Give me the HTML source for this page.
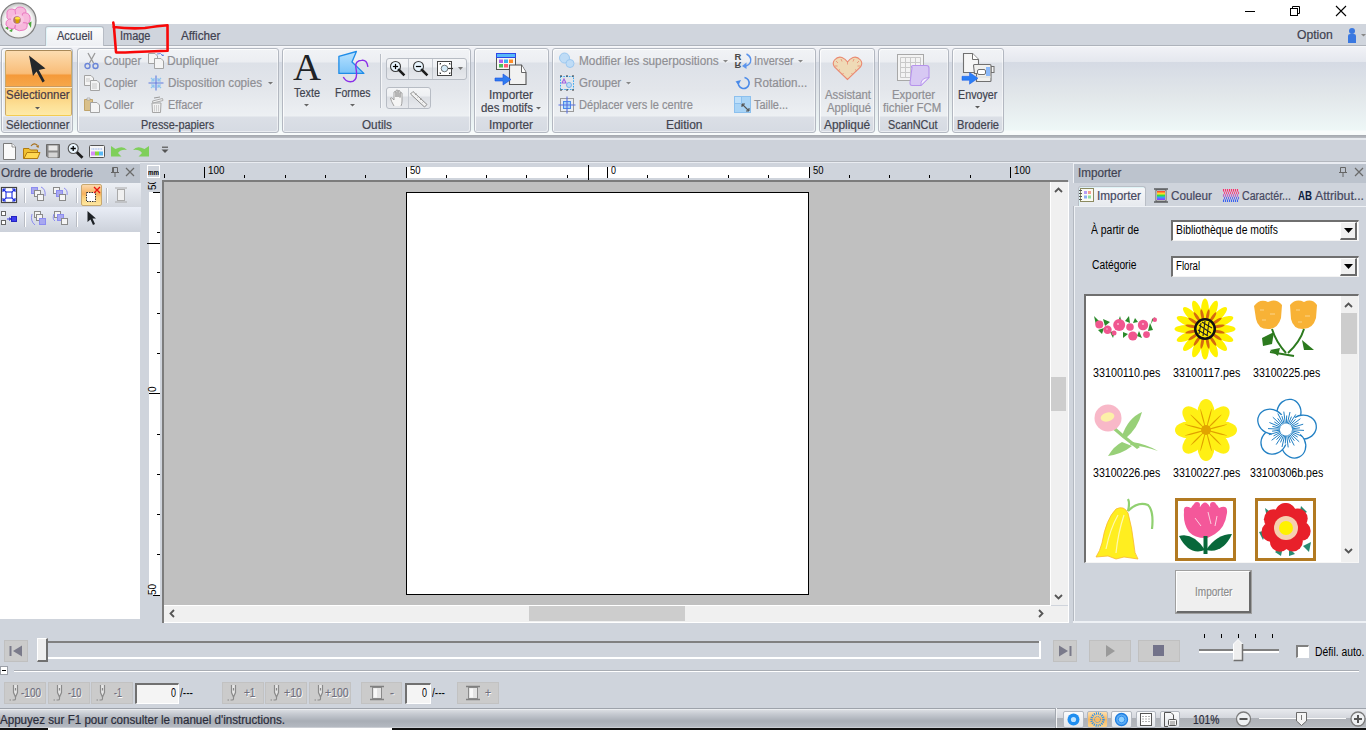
<!DOCTYPE html><html><head><meta charset="utf-8"><style>
*{margin:0;padding:0;box-sizing:border-box}
html,body{width:1366px;height:730px;overflow:hidden;background:#cfd4dc;font-family:"Liberation Sans",sans-serif;}
.a{position:absolute}
.t{position:absolute;white-space:nowrap;line-height:1;transform-origin:0 0}
.s{-webkit-text-stroke:0.2px currentColor}
svg{position:absolute;overflow:visible}
</style></head><body><div class="a" style="left:0px;top:0px;width:1366px;height:24px;background:#fff"></div>
<div class="a" style="left:1245px;top:11px;width:10px;height:1px;background:#000"></div>
<svg style="left:1289px;top:5px;" width="12" height="12" viewBox="0 0 12 12"><rect x="1.5" y="3.5" width="7" height="7" fill="none" stroke="#000"/><path d="M3.5 3.5V1.5H10.5V8.5H8.5" fill="none" stroke="#000"/></svg>
<svg style="left:1335px;top:5px;" width="12" height="12" viewBox="0 0 12 12"><path d="M1 1L11 11M11 1L1 11" stroke="#000" stroke-width="1.1"/></svg>
<div class="a" style="left:0px;top:24px;width:1366px;height:21px;background:#d0d5dd"></div>
<div class="a" style="left:0px;top:45px;width:1366px;height:1px;background:#aeb3bb"></div>
<div class="a" style="left:45px;top:26px;width:59px;height:20px;background:linear-gradient(#fbfcfd,#eef0f4);border:1px solid #b7bcc5;border-bottom:none;border-radius:3px 3px 0 0;box-shadow:inset 1px 1px 0 #dff4f8"></div>
<div class="t s" style="left:56.50px;top:30.00px;font-size:12px;color:#3f4150;font-weight:normal;transform:scaleX(0.9173);">Accueil</div>
<div class="t s" style="left:120.00px;top:30.00px;font-size:12px;color:#3f4150;font-weight:normal;transform:scaleX(0.9132);">Image</div>
<div class="t s" style="left:180.50px;top:30.00px;font-size:12px;color:#3f4150;font-weight:normal;transform:scaleX(0.9753);">Afficher</div>
<div class="t s" style="left:1296.60px;top:29.00px;font-size:12px;color:#3f4150;font-weight:normal;transform:scaleX(1.0141);">Option</div>
<svg style="left:1345px;top:26px;" width="22" height="20" viewBox="0 0 22 20"><circle cx="7" cy="5" r="3" fill="#3a78e0"/><path d="M3 10Q3 8 5 8H9Q11 8 11 10V17H3Z" fill="#3a78e0"/><path d="M16 8H21L18.5 10.5Z" fill="#888"/></svg>
<div class="a" style="left:0px;top:46px;width:1366px;height:89px;background:linear-gradient(#f7f8fa 0,#f7f8fa 1px,#f1f2f6 1px,#e4e7ee 16px,#d5dae4 16px,#e2e7ea 50px,#eef7f7 84px,#f8fbfb 85px)"></div>
<div class="a" style="left:0px;top:135px;width:1366px;height:3px;background:linear-gradient(#a3a7ae,#b9bcc2)"></div>
<div class="a" style="left:0px;top:138px;width:1366px;height:2px;background:#e6e9ee"></div>
<div class="a" style="left:1px;top:48px;width:72px;height:85px;border:1px solid #b3b8c1;border-radius:3px;background:linear-gradient(#f1f3f6 0px,#eceef2 13px,#dde1e8 14px,#e3e6eb 40px,#edf0f3 67px,#dbdfe6 68px,#d5dae2 84px);box-shadow:inset 1px 1px 0 rgba(255,255,255,.8),inset -1px -1px 0 rgba(255,255,255,.5)"></div>
<div class="t s" style="left:5.50px;top:119.00px;font-size:12px;color:#42444f;font-weight:normal;transform:scaleX(0.9520);">Sélectionner</div>
<div class="a" style="left:77px;top:48px;width:202px;height:85px;border:1px solid #b3b8c1;border-radius:3px;background:linear-gradient(#f1f3f6 0px,#eceef2 13px,#dde1e8 14px,#e3e6eb 40px,#edf0f3 67px,#dbdfe6 68px,#d5dae2 84px);box-shadow:inset 1px 1px 0 rgba(255,255,255,.8),inset -1px -1px 0 rgba(255,255,255,.5)"></div>
<div class="t s" style="left:141.40px;top:119.00px;font-size:12px;color:#42444f;font-weight:normal;transform:scaleX(0.9058);">Presse-papiers</div>
<div class="a" style="left:282px;top:48px;width:189px;height:85px;border:1px solid #b3b8c1;border-radius:3px;background:linear-gradient(#f1f3f6 0px,#eceef2 13px,#dde1e8 14px,#e3e6eb 40px,#edf0f3 67px,#dbdfe6 68px,#d5dae2 84px);box-shadow:inset 1px 1px 0 rgba(255,255,255,.8),inset -1px -1px 0 rgba(255,255,255,.5)"></div>
<div class="t s" style="left:361.70px;top:119.00px;font-size:12px;color:#42444f;font-weight:normal;transform:scaleX(0.9772);">Outils</div>
<div class="a" style="left:474px;top:48px;width:75px;height:85px;border:1px solid #b3b8c1;border-radius:3px;background:linear-gradient(#f1f3f6 0px,#eceef2 13px,#dde1e8 14px,#e3e6eb 40px,#edf0f3 67px,#dbdfe6 68px,#d5dae2 84px);box-shadow:inset 1px 1px 0 rgba(255,255,255,.8),inset -1px -1px 0 rgba(255,255,255,.5)"></div>
<div class="t s" style="left:489.00px;top:119.00px;font-size:12px;color:#42444f;font-weight:normal;transform:scaleX(0.9843);">Importer</div>
<div class="a" style="left:552px;top:48px;width:264px;height:85px;border:1px solid #b3b8c1;border-radius:3px;background:linear-gradient(#f1f3f6 0px,#eceef2 13px,#dde1e8 14px,#e3e6eb 40px,#edf0f3 67px,#dbdfe6 68px,#d5dae2 84px);box-shadow:inset 1px 1px 0 rgba(255,255,255,.8),inset -1px -1px 0 rgba(255,255,255,.5)"></div>
<div class="t s" style="left:666.00px;top:119.00px;font-size:12px;color:#42444f;font-weight:normal;transform:scaleX(0.9946);">Edition</div>
<div class="a" style="left:819px;top:48px;width:56px;height:85px;border:1px solid #b3b8c1;border-radius:3px;background:linear-gradient(#f1f3f6 0px,#eceef2 13px,#dde1e8 14px,#e3e6eb 40px,#edf0f3 67px,#dbdfe6 68px,#d5dae2 84px);box-shadow:inset 1px 1px 0 rgba(255,255,255,.8),inset -1px -1px 0 rgba(255,255,255,.5)"></div>
<div class="t s" style="left:824.40px;top:119.00px;font-size:12px;color:#42444f;font-weight:normal;transform:scaleX(0.9872);">Appliqué</div>
<div class="a" style="left:878px;top:48px;width:71px;height:85px;border:1px solid #b3b8c1;border-radius:3px;background:linear-gradient(#f1f3f6 0px,#eceef2 13px,#dde1e8 14px,#e3e6eb 40px,#edf0f3 67px,#dbdfe6 68px,#d5dae2 84px);box-shadow:inset 1px 1px 0 rgba(255,255,255,.8),inset -1px -1px 0 rgba(255,255,255,.5)"></div>
<div class="t s" style="left:888.40px;top:119.00px;font-size:12px;color:#42444f;font-weight:normal;transform:scaleX(0.9049);">ScanNCut</div>
<div class="a" style="left:952px;top:48px;width:52px;height:85px;border:1px solid #b3b8c1;border-radius:3px;background:linear-gradient(#f1f3f6 0px,#eceef2 13px,#dde1e8 14px,#e3e6eb 40px,#edf0f3 67px,#dbdfe6 68px,#d5dae2 84px);box-shadow:inset 1px 1px 0 rgba(255,255,255,.8),inset -1px -1px 0 rgba(255,255,255,.5)"></div>
<div class="t s" style="left:957.40px;top:119.00px;font-size:12px;color:#42444f;font-weight:normal;transform:scaleX(0.9273);">Broderie</div>
<div class="a" style="left:5px;top:50px;width:67px;height:66px;border:1px solid #c9a868;border-top-color:#a88858;border-bottom-color:#f4cc50;border-radius:2px;background:linear-gradient(#fcdcb0 0,#f9bd78 35%,#f59a3a 38%,#f6a84b 56%,#d49a58 57%,#f9c56c 58%,#fde096 85%,#fdeaa8 100%)"></div>
<svg style="left:28px;top:55px;" width="20" height="28" viewBox="0 0 20 28"><path d="M1 0.5L5 21L8.5 16.5L14.5 27.5L16.8 26L10.8 15L17.5 13.5Z" fill="#23272b"/></svg>
<div class="a" style="left:5px;top:86px;width:67px;height:1px;background:#c89a62"></div>
<div class="a" style="left:5px;top:87px;width:67px;height:1px;background:#fde9c0"></div>
<div class="t s" style="left:6.40px;top:89.00px;font-size:12px;color:#4a3a44;font-weight:normal;transform:scaleX(0.9535);">Sélectionner</div>
<svg style="left:35.0px;top:106.5px;" width="5.0" height="2.5" viewBox="0 0 5.0 2.5"><path d="M0 0H5.0L2.5 2.5Z" fill="#5a5a5a"/><path d="M2.5 3.5L5.5 .5" stroke="#fff" stroke-width=".6" opacity=".7"/></svg>
<div class="t s" style="left:103.80px;top:55.00px;font-size:12px;color:#8f8f94;font-weight:normal;transform:scaleX(0.9442);">Couper</div>
<div class="t s" style="left:103.80px;top:77.00px;font-size:12px;color:#8f8f94;font-weight:normal;transform:scaleX(0.9405);">Copier</div>
<div class="t s" style="left:103.80px;top:99.00px;font-size:12px;color:#8f8f94;font-weight:normal;transform:scaleX(0.9489);">Coller</div>
<div class="t s" style="left:167.20px;top:55.00px;font-size:12px;color:#8f8f94;font-weight:normal;transform:scaleX(1.0078);">Dupliquer</div>
<div class="t s" style="left:167.50px;top:77.00px;font-size:12px;color:#8f8f94;font-weight:normal;transform:scaleX(0.9721);">Disposition copies</div>
<div class="t s" style="left:167.50px;top:99.00px;font-size:12px;color:#8f8f94;font-weight:normal;transform:scaleX(0.9127);">Effacer</div>
<svg style="left:267.5px;top:81.5px;" width="5.0" height="2.5" viewBox="0 0 5.0 2.5"><path d="M0 0H5.0L2.5 2.5Z" fill="#777"/><path d="M2.5 3.5L5.5 .5" stroke="#fff" stroke-width=".6" opacity=".7"/></svg>
<div class="t s" style="left:294.00px;top:87.00px;font-size:12px;color:#42444f;font-weight:normal;transform:scaleX(0.9059);">Texte</div>
<div class="t s" style="left:334.50px;top:87.00px;font-size:12px;color:#42444f;font-weight:normal;transform:scaleX(0.8722);">Formes</div>
<svg style="left:304.0px;top:104px;" width="5.0" height="2.5" viewBox="0 0 5.0 2.5"><path d="M0 0H5.0L2.5 2.5Z" fill="#666"/><path d="M2.5 3.5L5.5 .5" stroke="#fff" stroke-width=".6" opacity=".7"/></svg>
<svg style="left:350.0px;top:104px;" width="5.0" height="2.5" viewBox="0 0 5.0 2.5"><path d="M0 0H5.0L2.5 2.5Z" fill="#666"/><path d="M2.5 3.5L5.5 .5" stroke="#fff" stroke-width=".6" opacity=".7"/></svg>
<div class="a" style="left:380px;top:54px;width:1px;height:54px;background:#b9bec6;box-shadow:1px 0 0 #f5f6f8"></div>
<div class="t s" style="left:489.00px;top:89.00px;font-size:12px;color:#42444f;font-weight:normal;transform:scaleX(0.9843);">Importer</div>
<div class="t s" style="left:480.60px;top:102.00px;font-size:12px;color:#42444f;font-weight:normal;transform:scaleX(0.9506);">des motifs</div>
<svg style="left:536.0px;top:106.5px;" width="5.0" height="2.5" viewBox="0 0 5.0 2.5"><path d="M0 0H5.0L2.5 2.5Z" fill="#666"/><path d="M2.5 3.5L5.5 .5" stroke="#fff" stroke-width=".6" opacity=".7"/></svg>
<div class="t s" style="left:578.60px;top:55.00px;font-size:12px;color:#8f8f94;font-weight:normal;transform:scaleX(0.9838);">Modifier les superpositions</div>
<div class="t s" style="left:578.60px;top:77.00px;font-size:12px;color:#8f8f94;font-weight:normal;transform:scaleX(0.9568);">Grouper</div>
<div class="t s" style="left:578.60px;top:99.00px;font-size:12px;color:#8f8f94;font-weight:normal;transform:scaleX(0.9222);">Déplacer vers le centre</div>
<div class="t s" style="left:754.40px;top:55.00px;font-size:12px;color:#8f8f94;font-weight:normal;transform:scaleX(0.9145);">Inverser</div>
<div class="t s" style="left:754.40px;top:77.00px;font-size:12px;color:#8f8f94;font-weight:normal;transform:scaleX(0.9726);">Rotation...</div>
<div class="t s" style="left:754.40px;top:99.00px;font-size:12px;color:#8f8f94;font-weight:normal;transform:scaleX(0.9115);">Taille...</div>
<svg style="left:723.0px;top:59.5px;" width="5.0" height="2.5" viewBox="0 0 5.0 2.5"><path d="M0 0H5.0L2.5 2.5Z" fill="#888"/><path d="M2.5 3.5L5.5 .5" stroke="#fff" stroke-width=".6" opacity=".7"/></svg>
<svg style="left:625.5px;top:81.5px;" width="5.0" height="2.5" viewBox="0 0 5.0 2.5"><path d="M0 0H5.0L2.5 2.5Z" fill="#888"/><path d="M2.5 3.5L5.5 .5" stroke="#fff" stroke-width=".6" opacity=".7"/></svg>
<svg style="left:798.0px;top:59.5px;" width="5.0" height="2.5" viewBox="0 0 5.0 2.5"><path d="M0 0H5.0L2.5 2.5Z" fill="#888"/><path d="M2.5 3.5L5.5 .5" stroke="#fff" stroke-width=".6" opacity=".7"/></svg>
<div class="t s" style="left:825.00px;top:89.00px;font-size:12px;color:#8f8f94;font-weight:normal;transform:scaleX(0.9446);">Assistant</div>
<div class="t s" style="left:827.00px;top:102.00px;font-size:12px;color:#8f8f94;font-weight:normal;transform:scaleX(0.9422);">Appliqué</div>
<div class="t s" style="left:891.70px;top:89.00px;font-size:12px;color:#8f8f94;font-weight:normal;transform:scaleX(0.9493);">Exporter</div>
<div class="t s" style="left:883.30px;top:102.00px;font-size:12px;color:#8f8f94;font-weight:normal;transform:scaleX(0.9511);">fichier FCM</div>
<div class="t s" style="left:958.40px;top:89.00px;font-size:12px;color:#42444f;font-weight:normal;transform:scaleX(0.8955);">Envoyer</div>
<svg style="left:975.0px;top:106px;" width="5.0" height="2.5" viewBox="0 0 5.0 2.5"><path d="M0 0H5.0L2.5 2.5Z" fill="#5a5a5a"/><path d="M2.5 3.5L5.5 .5" stroke="#fff" stroke-width=".6" opacity=".7"/></svg>
<div class="a" style="left:0px;top:140px;width:1366px;height:21px;background:#cdd2da"></div>
<div class="a" style="left:0px;top:161px;width:1366px;height:1px;background:#b3b7be"></div>
<div class="a" style="left:0px;top:162px;width:1366px;height:1px;background:#e9ecf2"></div>
<svg style="left:0px;top:1px;" width="38" height="38" viewBox="0 0 38 38"><defs><radialGradient id="ab" cx="50%" cy="55%" r="55%"><stop offset="0" stop-color="#ffffff"/><stop offset=".75" stop-color="#f2f2f2"/><stop offset=".92" stop-color="#cfcfcf"/><stop offset="1" stop-color="#a8a8a8"/></radialGradient></defs>
<circle cx="18.5" cy="19.5" r="17.5" fill="url(#ab)" stroke="#7e7e7e" stroke-width="1.2"/>
<path d="M5 27L9 25L8 29Z M9 30L13 27L12 31Z M28 22L31.5 20.5L31 27Z" fill="#4fa83e"/>
<g fill="#f7b8dc" stroke="#ea7cc2" stroke-width="1">
<path d="M7 14Q6 8 12 8Q15 8 17 11L16 18L9 19Q6 17 7 14Z"/>
<path d="M15 9Q17 5 21 6Q26 7 26 11L23 17L16 16Z"/>
<path d="M23 12Q29 11 30 16Q31 21 27 23L20 20Z"/>
<path d="M27 22Q28 28 24 29Q19 31 15 28L16 21Z"/>
<path d="M14 28Q8 28 6 24Q5 20 9 18L17 19Z"/></g>
<ellipse cx="17.5" cy="18.5" rx="6.5" ry="5.5" fill="#f9c6e2"/>
<circle cx="17" cy="19" r="3.8" fill="#9b5a4a" opacity=".75"/><path d="M15 17H20L18.5 22H16Z" fill="#d8a000"/><ellipse cx="17.5" cy="17.2" rx="2.6" ry="1.3" fill="#ffe640"/></svg>
<svg style="left:110px;top:20px;" width="62" height="36" viewBox="0 0 62 36"><path d="M3.3 2.6L4 7.5Q5 20 6 32M3.5 7Q20 9 35 8Q48 6 57.5 5.2L57.6 30.8Q40 31.5 25 32Q15 32.5 6.2 32.5" fill="none" stroke="#f80808" stroke-width="2.6" stroke-linecap="round" stroke-linejoin="round"/></svg>
<svg style="left:84px;top:52px;" width="15" height="18" viewBox="0 0 15 18"><path d="M4 1L9.5 11M11 1L5.5 11" stroke="#9a9a9a" stroke-width="1.3"/><circle cx="3.5" cy="14" r="2.5" fill="none" stroke="#6b86d8" stroke-width="1.4"/><circle cx="11.5" cy="14" r="2.5" fill="none" stroke="#6b86d8" stroke-width="1.4"/></svg>
<svg style="left:84px;top:75px;" width="17" height="17" viewBox="0 0 17 17"><path d="M0.5 0.5H7L9.5 3V10.5H0.5Z" fill="#f4f4f4" stroke="#a3a3a3"/><path d="M6.5 5.5H13L15.5 8V15.5H6.5Z" fill="#f4f4f4" stroke="#a3a3a3"/><path d="M2 4H6M2 6H6M8 9H13M8 11H13M8 13H13" stroke="#bdbdbd" stroke-width=".8"/></svg>
<svg style="left:84px;top:97px;" width="17" height="17" viewBox="0 0 17 17"><path d="M.5 2.5H8.5V13.5H.5Z" fill="#d9c08a" stroke="#c0a46a"/><path d="M3 1H6V3H3Z" fill="#eee" stroke="#999" stroke-width=".6"/><path d="M6.5 5.5H13L15.5 8V15.5H6.5Z" fill="#f4f4f4" stroke="#a3a3a3"/></svg>
<svg style="left:148px;top:52px;" width="17" height="18" viewBox="0 0 17 18"><path d="M0.5 1.5H7L9.5 4V11.5H0.5Z" fill="#f4f4f4" stroke="#a3a3a3"/><path d="M6.5 6.5H13L15.5 9V16.5H6.5Z" fill="#f4f4f4" stroke="#a3a3a3"/><path d="M9 2Q13 0 15 4" fill="none" stroke="#5a7ee0" stroke-width=".9"/><path d="M13.5 4H16L15 2Z" fill="#5a7ee0"/></svg>
<svg style="left:148px;top:75px;" width="16" height="16" viewBox="0 0 16 16"><path d="M8 .5V15.5M.5 8H15.5" stroke="#5c7be0" stroke-width="1.1"/><g stroke="#8cc4f0" stroke-width="1.2" fill="none"><path d="M3 3L6 6M3 6H6V3M13 3L10 6M10 3V6H13M3 13L6 10M3 10H6V13M13 13L10 10M10 13V10H13"/></g></svg>
<svg style="left:150px;top:96px;" width="15" height="18" viewBox="0 0 15 18"><path d="M2 7H11L10.5 16.5H2.5Z" fill="#f2f2f2" stroke="#a5a5a5"/><path d="M4.5 9V15.5M6.5 9V15.5M8.5 9V15.5" stroke="#c4c4c4" stroke-width=".8"/><path d="M2.5 5L12.5 2.5L13 4.5L3 7Z" fill="#f0f0f0" stroke="#a5a5a5" stroke-width=".9"/><path d="M4 2L10 1" stroke="#999"/></svg>
<div class="t" style="left:293px;top:48px;font-family:&quot;Liberation Serif&quot;,serif;font-size:38px;color:#1f2326;transform:scaleX(1.02)">A</div>
<svg style="left:337px;top:50px;" width="33" height="34" viewBox="0 0 33 34"><defs><linearGradient id="fg" x1="0" y1="0" x2="0" y2="1"><stop offset="0" stop-color="#b8e2ff"/><stop offset="1" stop-color="#7cc4f8"/></linearGradient></defs><path d="M1.9 6.3L19.4 1.5L15 12L26.9 23.4H1.9Z" fill="url(#fg)" stroke="#1e8ce8" stroke-width="1.3" stroke-linejoin="round"/><path d="M30.9 16.8Q30 9.5 24.7 10.3Q18 11 18.8 17Q19.6 22 19.6 24Q19.5 31.8 13.3 31.8Q8.5 31.6 6.3 27" fill="none" stroke="#8a2ee8" stroke-width="1.4"/></svg>
<div class="a" style="left:386px;top:58px;width:81px;height:22px;border:1px solid #b7bcc4;border-radius:3px;background:linear-gradient(#f4f5f7 0,#eef0f3 8px,#dcdfe4 9px,#e7e9ed 100%)"></div>
<div class="a" style="left:408px;top:59px;width:1px;height:20px;background:#c5c9d0"></div>
<div class="a" style="left:432px;top:59px;width:1px;height:20px;background:#c5c9d0"></div>
<div class="a" style="left:386px;top:87px;width:45px;height:22px;border:1px solid #b7bcc4;border-radius:3px;background:linear-gradient(#f4f5f7 0,#eef0f3 8px,#dcdfe4 9px,#e7e9ed 100%)"></div>
<div class="a" style="left:408px;top:88px;width:1px;height:20px;background:#c5c9d0"></div>
<svg style="left:386px;top:58px;" width="81" height="22" viewBox="0 0 81 22"><circle cx="9.5" cy="8.5" r="5" fill="#e9f6ff" stroke="#3a3a3a" stroke-width="1.1"/><path d="M13.0 12.0L17.5 16.5" stroke="#1c1c1c" stroke-width="2.6" stroke-linecap="square"/><path d="M6.9 8.5H12.1" stroke="#000" stroke-width="1.2"/><path d="M9.5 5.9V11.1" stroke="#000" stroke-width="1.2"/><circle cx="32.5" cy="8.5" r="5" fill="#e9f6ff" stroke="#3a3a3a" stroke-width="1.1"/><path d="M36.0 12.0L40.5 16.5" stroke="#1c1c1c" stroke-width="2.6" stroke-linecap="square"/><path d="M29.9 8.5H35.1" stroke="#000" stroke-width="1.2"/><rect x="51.5" y="3.5" width="14" height="14" fill="#fff" stroke="#444"/><circle cx="58.5" cy="10.5" r="3.3" fill="#d5ecfa" stroke="#555" stroke-width=".8"/><path d="M54 6.5V5.5H55M63 5.5H64V6.5M54 14.5V15.5H55M63 15.5H64V14.5" stroke="#333"/><path d="M62 10.5H67" stroke="#333" stroke-width="1.2"/><path d="M72 9H77L74.5 12Z" fill="#777"/></svg>
<svg style="left:386px;top:87px;" width="45" height="22" viewBox="0 0 45 22"><path d="M8 19Q5 14 4.5 11Q5 10 7 12L8 13V5Q9 4 10 5V10V3.5Q11 2.5 12 3.5V10V4Q13 3 14 4V10.5V6Q15 5 16 6V14Q16 17 15 19" fill="#f5f5f5" stroke="#9a9a9a" stroke-width=".9"/><path d="M27 4.5L41 17.5L38.5 20L24.5 7Z" fill="#f1f1f1" stroke="#8e8e8e"/><path d="M29 8L30.5 6.5M31.5 10.5L33 9M34 13L35.5 11.5M36.5 15.5L38 14" stroke="#999" stroke-width=".8"/></svg>
<svg style="left:494px;top:51px;" width="34" height="36" viewBox="0 0 34 36"><rect x="2.5" y="2.5" width="19" height="16" fill="#f6f6f2" stroke="#555"/><rect x="2.5" y="2.5" width="19" height="4" fill="#57b8f8" stroke="#2c48e8"/><rect x="5" y="8.5" width="4" height="3.5" fill="#b05ef0"/><rect x="10" y="8.5" width="4" height="3.5" fill="#37b0f0"/><rect x="15" y="8.5" width="4" height="3.5" fill="#ff8c28"/><rect x="5" y="13" width="4" height="3.5" fill="#4ebe5a"/><rect x="10" y="13" width="4" height="3.5" fill="#ff5a78"/><path d="M15.5 14V33.5H32V21.5L27.5 14Z" fill="#f2f2f2" stroke="#555" stroke-width="1.1"/><path d="M27.5 14V21.5H32" fill="#fff" stroke="#555" stroke-width=".9"/><path d="M1 27H9V23L17 28.5L9 34V30H1Z" fill="#2f7cf0" stroke="#1a4ee0" stroke-width=".6"/></svg>
<svg style="left:558px;top:51px;" width="18" height="18" viewBox="0 0 18 18"><circle cx="6.5" cy="7" r="5" fill="#bfdcf6" stroke="#9cc8f0"/><circle cx="12" cy="12.5" r="4" fill="#bfdcf6" stroke="#9cc8f0"/></svg>
<svg style="left:558px;top:74px;" width="18" height="18" viewBox="0 0 18 18"><rect x="2.5" y="2.5" width="13" height="13" fill="none" stroke="#36a8f0" stroke-dasharray="1.6 1.2"/><path d="M2 2H4M14 2H16M2 16H4M14 16H16M8 2H10M8 16H10" stroke="#333"/><path d="M6 5L8 9H4Z" fill="none" stroke="#a060e0" stroke-width="1.1"/><circle cx="11" cy="11" r="2.5" fill="#bfdcf6" stroke="#79b4ea"/></svg>
<svg style="left:557px;top:96px;" width="20" height="18" viewBox="0 0 20 18"><rect x="3.5" y="2.5" width="13" height="13" fill="none" stroke="#9a9a9a"/><rect x="6.5" y="5.5" width="7" height="7" fill="#a8d4f8" stroke="#4d8ce8"/><path d="M10 .5V17.5M1.5 9H18.5" stroke="#5a70e0" stroke-width="1.1"/></svg>
<svg style="left:734px;top:52px;" width="20" height="19" viewBox="0 0 20 19"><text x="0.5" y="8" font-family="Liberation Sans" font-weight="bold" font-size="9.5" fill="#4a4a4a">R</text><g transform="translate(0,18) scale(1,-1)"><text x="0.5" y="8" font-family="Liberation Sans" font-weight="bold" font-size="9.5" fill="#4a4a4a">R</text></g><path d="M12.5 2Q18 5 16.5 10Q15 13.5 11 14" fill="none" stroke="#5b94ec" stroke-width="1.5"/><path d="M8 14L12.5 10.5L12.5 17Z" fill="#5b94ec"/></svg>
<svg style="left:735px;top:75px;" width="16" height="16" viewBox="0 0 16 16"><path d="M9.5 2.5A5.5 5.5 0 1 1 3.5 6" fill="none" stroke="#4a8ae8" stroke-width="1.6"/><path d="M0.5 6.5L6 5L3.5 10Z" fill="#4a8ae8"/></svg>
<svg style="left:734px;top:96px;" width="18" height="18" viewBox="0 0 18 18"><rect x=".5" y=".5" width="16" height="16" fill="#a9d4f6" stroke="#8cc0ee"/><rect x=".5" y=".5" width="7" height="7" fill="#bfe0fa" stroke="#8cc0ee"/><path d="M8 8L15 15M8 8H11M8 8V11M15 15H12M15 15V12" stroke="#555" stroke-width="1.1"/></svg>
<svg style="left:832px;top:56px;" width="31" height="25" viewBox="0 0 31 25"><path d="M15.5 23.5L2.5 11Q0 7 2.5 4Q6 0 10 1.5Q13.5 3 15.5 6Q17.5 3 21 1.5Q25 0 28.5 4Q31 7 28.5 11Z" fill="#efdab6" stroke="#ea8a72" stroke-width="1.1"/><path d="M4 5L6 7M9 3L10 5.5M15.5 6V8.5M22 3L21 5.5M27 5L25 7M3 10H5.5M28 10H25.5M6 15L8 13.5M25 15L23 13.5M10 19L11.5 17M21 19L19.5 17" stroke="#ea8a72" stroke-width=".8"/></svg>
<svg style="left:896px;top:53px;" width="35" height="34" viewBox="0 0 35 34"><rect x="1.5" y="1.5" width="26" height="26" fill="#f3f3f3" stroke="#a8a8a8"/><path d="M4.5 4.5H24.5V24.5H4.5Z M9.5 4.5V24.5M14.5 4.5V24.5M19.5 4.5V24.5M4.5 9.5H24.5M4.5 14.5H24.5M4.5 19.5H24.5" fill="none" stroke="#c9c9c9"/><path d="M16 14.5Q14.5 13 17 12.5H30.5Q33 12.5 33 15V24.5L25 32.5H16Q14 32.5 14 30Z" fill="#d7c8f3" stroke="#b693ec" stroke-width="1.1"/><path d="M25 32.5Q24 25 33 24.5Z" fill="#f2eefc" stroke="#b693ec" stroke-width=".9"/></svg>
<svg style="left:960px;top:51px;" width="36" height="34" viewBox="0 0 36 34"><path d="M3.5 2.5H12.5L18.5 8.5V21.5H3.5Z" fill="#f6f6f6" stroke="#707070" stroke-width="1.1"/><path d="M12.5 2.5V8.5H18.5" fill="#fff" stroke="#707070" stroke-width="1"/><rect x="31" y="15.5" width="3" height="6" fill="#f4f4f4" stroke="#707070"/><path d="M13.5 14.5Q13.5 13.5 14.5 13.5H30Q31 13.5 31 14.5V29.5Q31 30.5 30 30.5H16.5V22.5H14.5Z" fill="#f0f0ee" stroke="#707070" stroke-width="1.1"/><rect x="17.5" y="18.5" width="8" height="5" rx="1.5" fill="#fff" stroke="#707070"/><rect x="26" y="16" width="4" height="9" fill="#8ab8f8"/><path d="M16 26H31" stroke="#dcdcd8"/><path d="M2 25.3H9.5V21.5L18 27.3L9.5 33.2V29.3H2Z" fill="#2a7ef6" stroke="#1a5ae8" stroke-width=".5"/></svg>
<svg style="left:1px;top:142px;" width="16" height="19" viewBox="0 0 16 19"><path d="M2.5 1.5H11L14.5 5V17.5H2.5Z" fill="#fafafa" stroke="#7a7a7a"/><path d="M11 1.5V5H14.5" fill="#fff" stroke="#7a7a7a" stroke-width=".8"/></svg>
<svg style="left:22px;top:142px;" width="19" height="19" viewBox="0 0 19 19"><path d="M1.5 6.5H7L8.5 8H15.5V16.5H1.5Z" fill="#f0c030" stroke="#b07a10"/><path d="M2 16.5L5 10.5H18L15.5 16.5Z" fill="#ffd850" stroke="#b07a10"/><path d="M9 4Q12 0 15.5 3.5" fill="none" stroke="#a8701a" stroke-width="1.1"/><path d="M14 4.5L17 3L16.5 6Z" fill="#a8701a"/></svg>
<svg style="left:45px;top:143px;" width="16" height="16" viewBox="0 0 16 16"><path d="M1.5 1.5H14.5V14.5H3L1.5 13Z" fill="#888" stroke="#6b6b6b"/><rect x="3.5" y="2.5" width="9" height="5" fill="#e8e8e8"/><rect x="3.5" y="9.5" width="9" height="5" fill="#d5d5d5"/></svg>
<svg style="left:67px;top:142px;" width="18" height="18" viewBox="0 0 18 18"><circle cx="6.2" cy="6.5" r="5" fill="#eaf6ff" stroke="#555" stroke-width="1.1"/><path d="M3.6 6.5H8.8M6.2 3.9V9.1" stroke="#000" stroke-width="1.3"/><path d="M9.8 10.3L15.5 15.8" stroke="#1c1c1c" stroke-width="2.8"/></svg>
<svg style="left:89px;top:145px;" width="17" height="14" viewBox="0 0 17 14"><rect x=".5" y=".5" width="15" height="12" rx="1" fill="#f6f6f6" stroke="#555"/><path d="M2.5 4H13.5" stroke="#88aaee" stroke-dasharray="1 .6"/><rect x="2" y="6.5" width="4" height="4" fill="#d58cf8"/><rect x="6" y="6.5" width="4" height="4" fill="#8ad838"/><rect x="10" y="6.5" width="4" height="4" fill="#5ab8f4"/></svg>
<svg style="left:110px;top:145px;" width="18" height="13" viewBox="0 0 18 13"><path d="M1 1L1 11.5L11.5 11.5L8 8Q11 4 17 5Q13 0 5.5 4Z" fill="#7fcf5a"/></svg>
<svg style="left:132px;top:145px;" width="18" height="13" viewBox="0 0 18 13"><path d="M17 1L17 11.5L6.5 11.5L10 8Q7 4 1 5Q5 0 12.5 4Z" fill="#7fcf5a"/></svg>
<svg style="left:161px;top:146px;" width="8" height="8" viewBox="0 0 8 8"><path d="M1 1.2H7" stroke="#555" stroke-width="1.2"/><path d="M.5 3.5H7.5L4 7Z" fill="#555"/></svg>
<div class="a" style="left:0px;top:162px;width:140px;height:2px;background:#e9ecf2"></div>
<div class="a" style="left:0px;top:164px;width:140px;height:19px;background:#bcc3cd"></div>
<div class="t s" style="left:0.50px;top:167.00px;font-size:12px;color:#3f4150;font-weight:normal;transform:scaleX(0.9715);">Ordre de broderie</div>
<svg style="left:109px;top:166px;" width="12" height="12" viewBox="0 0 12 12"><path d="M3.5 1.5H8.5V6.5H3.5Z M2 6.5H10M6 6.5V11" fill="none" stroke="#666" stroke-width="1"/><path d="M4.5 1.5V6.5" stroke="#666"/></svg>
<svg style="left:125px;top:167px;" width="10" height="10" viewBox="0 0 10 10"><path d="M1 1L9 9M9 1L1 9" stroke="#6a6a6a" stroke-width="1.2"/></svg>
<div class="a" style="left:0px;top:183px;width:141px;height:24px;background:linear-gradient(#edf0f5,#d2d6de)"></div>
<div class="a" style="left:0px;top:207px;width:141px;height:25px;background:linear-gradient(#e9edf6,#ccd1da)"></div>
<div class="a" style="left:24px;top:188px;width:1px;height:15px;background:#b8bcc4;box-shadow:1px 0 0 #fff"></div>
<div class="a" style="left:76px;top:188px;width:1px;height:15px;background:#b8bcc4;box-shadow:1px 0 0 #fff"></div>
<div class="a" style="left:106px;top:188px;width:1px;height:15px;background:#b8bcc4;box-shadow:1px 0 0 #fff"></div>
<div class="a" style="left:24px;top:212px;width:1px;height:15px;background:#b8bcc4;box-shadow:1px 0 0 #fff"></div>
<div class="a" style="left:76px;top:212px;width:1px;height:15px;background:#b8bcc4;box-shadow:1px 0 0 #fff"></div>
<div class="a" style="left:81px;top:184px;width:21px;height:22px;border:1px solid #c8a870;border-radius:2px;background:linear-gradient(#fbd9ae,#f7b05a 45%,#fbcf7a 60%,#fde7a0)"></div>
<svg style="left:0px;top:186px;" width="18" height="18" viewBox="0 0 18 18"><rect x="1.5" y="1.5" width="15" height="15" fill="#fff" stroke="#444" stroke-width="1.2"/><rect x="6" y="6" width="6" height="6" fill="none" stroke="#1c2ee0" stroke-width="1.1"/><path d="M3 3L6 6M15 3L12 6M3 15L6 12M15 15L12 12M3 3H6M3 3V6M15 3H12M15 3V6M3 15H6M3 15V12M15 15H12M15 15V12" stroke="#1c2ee0" stroke-width="1.1"/></svg>
<svg style="left:30px;top:186px;" width="18" height="18" viewBox="0 0 18 18"><rect x="1.5" y="1.5" width="6" height="6" fill="#a8a8f0" stroke="#8c8cf0"/><rect x="4.5" y="4.5" width="6" height="6" fill="#f4f4f4" stroke="#8a8a8a"/><rect x="7.5" y="8.5" width="6" height="6" fill="#f4f4f4" stroke="#8a8a8a"/><path d="M11 1Q16 3 15 10" fill="none" stroke="#8c8cf0"/></svg>
<svg style="left:52px;top:186px;" width="18" height="18" viewBox="0 0 18 18"><rect x="1.5" y="1.5" width="6" height="6" fill="#f4f4f4" stroke="#8a8a8a"/><rect x="4.5" y="4.5" width="6" height="6" fill="#a8a8f0" stroke="#8c8cf0"/><rect x="7.5" y="8.5" width="6" height="6" fill="#f4f4f4" stroke="#8a8a8a"/><path d="M12 2Q16 4 15 9" fill="none" stroke="#8c8cf0"/></svg>
<svg style="left:82px;top:185px;" width="20" height="20" viewBox="0 0 20 20"><rect x="4.5" y="7.5" width="9" height="9" fill="#fff" stroke="#333" stroke-dasharray="1.5 1"/><path d="M12 2L18 8M18 2L12 8" stroke="#e81010" stroke-width="1.3"/></svg>
<svg style="left:114px;top:187px;" width="14" height="16" viewBox="0 0 14 16"><path d="M1 1H13M1 15H13" stroke="#aaa" stroke-width="1.2"/><rect x="3.5" y="2.5" width="7" height="11" fill="#f0f0f0" stroke="#aaa"/></svg>
<svg style="left:0px;top:210px;" width="18" height="18" viewBox="0 0 18 18"><rect x="1.5" y="1.5" width="4" height="4" fill="#fff" stroke="#666"/><rect x="1.5" y="10.5" width="4" height="4" fill="#fff" stroke="#666"/><rect x="11.5" y="6.5" width="5" height="5" fill="#3c3cf0" stroke="#2424c0"/><path d="M7 9H11M9.5 7.5L11 9L9.5 10.5" stroke="#3c3cf0"/></svg>
<svg style="left:30px;top:210px;" width="18" height="18" viewBox="0 0 18 18"><rect x="4.5" y="1.5" width="6" height="6" fill="#f4f4f4" stroke="#8a8a8a"/><rect x="6.5" y="4.5" width="6" height="6" fill="#f4f4f4" stroke="#8a8a8a"/><rect x="9.5" y="8.5" width="6" height="6" fill="#a8a8f0" stroke="#8c8cf0"/><path d="M2 4Q0 11 5 15" fill="none" stroke="#8c8cf0"/></svg>
<svg style="left:52px;top:210px;" width="18" height="18" viewBox="0 0 18 18"><rect x="2.5" y="1.5" width="6" height="6" fill="#f4f4f4" stroke="#8a8a8a"/><rect x="5.5" y="4.5" width="6" height="6" fill="#a8a8f0" stroke="#8c8cf0"/><rect x="9.5" y="8.5" width="6" height="6" fill="#f4f4f4" stroke="#8a8a8a"/><path d="M2 4Q0 9 3 11" fill="none" stroke="#8c8cf0"/></svg>
<svg style="left:86px;top:210px;" width="12" height="18" viewBox="0 0 12 18"><path d="M1.5 1L1.5 12L4.5 9.5L7 15L9 14L6.5 8.5H10Z" fill="#1e2226"/></svg>
<div class="a" style="left:0px;top:232px;width:140px;height:387px;background:#fff"></div>
<div class="a" style="left:141px;top:162px;width:932px;height:1px;background:#e9ecf1"></div>
<div class="a" style="left:141px;top:163px;width:932px;height:18px;background:#cfd4dc"></div>
<div class="a" style="left:147px;top:165px;width:13px;height:13px;background:#cfd4dc;border:1px solid #fff"></div>
<div class="t" style="left:148.00px;top:169.00px;font-size:8px;color:#000;font-weight:bold;transform:scaleX(0.7746);">mm</div>
<div class="a" style="left:164px;top:174px;width:1px;height:4px;background:#000"></div>
<div class="a" style="left:406px;top:167px;width:403px;height:11px;background:#fff"></div>
<div class="a" style="left:204px;top:167px;width:1px;height:11px;background:#000"></div>
<div class="t" style="left:208.00px;top:166.00px;font-size:10px;color:#000;font-weight:normal;transform:scaleX(0.9820);">100</div>
<div class="a" style="left:406px;top:167px;width:1px;height:11px;background:#000"></div>
<div class="t" style="left:410.00px;top:166.00px;font-size:10px;color:#000;font-weight:normal;transform:scaleX(0.9459);">50</div>
<div class="a" style="left:607px;top:167px;width:1px;height:11px;background:#000"></div>
<div class="t" style="left:611.00px;top:166.00px;font-size:10px;color:#000;font-weight:normal;transform:scaleX(0.8929);">0</div>
<div class="a" style="left:809px;top:167px;width:1px;height:11px;background:#000"></div>
<div class="t" style="left:813.00px;top:166.00px;font-size:10px;color:#000;font-weight:normal;transform:scaleX(0.9459);">50</div>
<div class="a" style="left:1010px;top:167px;width:1px;height:11px;background:#000"></div>
<div class="t" style="left:1014.00px;top:166.00px;font-size:10px;color:#000;font-weight:normal;transform:scaleX(0.9820);">100</div>
<div class="a" style="left:164px;top:175px;width:1px;height:3px;background:#000"></div>
<div class="a" style="left:244px;top:175px;width:1px;height:3px;background:#000"></div>
<div class="a" style="left:285px;top:175px;width:1px;height:3px;background:#000"></div>
<div class="a" style="left:325px;top:175px;width:1px;height:3px;background:#000"></div>
<div class="a" style="left:365px;top:175px;width:1px;height:3px;background:#000"></div>
<div class="a" style="left:446px;top:175px;width:1px;height:3px;background:#000"></div>
<div class="a" style="left:486px;top:175px;width:1px;height:3px;background:#000"></div>
<div class="a" style="left:526px;top:175px;width:1px;height:3px;background:#000"></div>
<div class="a" style="left:567px;top:175px;width:1px;height:3px;background:#000"></div>
<div class="a" style="left:647px;top:175px;width:1px;height:3px;background:#000"></div>
<div class="a" style="left:688px;top:175px;width:1px;height:3px;background:#000"></div>
<div class="a" style="left:728px;top:175px;width:1px;height:3px;background:#000"></div>
<div class="a" style="left:768px;top:175px;width:1px;height:3px;background:#000"></div>
<div class="a" style="left:849px;top:175px;width:1px;height:3px;background:#000"></div>
<div class="a" style="left:889px;top:175px;width:1px;height:3px;background:#000"></div>
<div class="a" style="left:929px;top:175px;width:1px;height:3px;background:#000"></div>
<div class="a" style="left:970px;top:175px;width:1px;height:3px;background:#000"></div>
<div class="a" style="left:588px;top:165px;width:1px;height:15px;background:#000"></div>
<div class="a" style="left:149px;top:192px;width:11px;height:403px;background:#fff"></div>
<div class="a" style="left:153px;top:192px;width:7px;height:1px;background:#000"></div>
<div class="a" style="left:157px;top:232px;width:3px;height:1px;background:#000"></div>
<div class="a" style="left:157px;top:272px;width:3px;height:1px;background:#000"></div>
<div class="a" style="left:157px;top:313px;width:3px;height:1px;background:#000"></div>
<div class="a" style="left:157px;top:353px;width:3px;height:1px;background:#000"></div>
<div class="a" style="left:149px;top:393px;width:11px;height:1px;background:#000"></div>
<div class="a" style="left:157px;top:434px;width:3px;height:1px;background:#000"></div>
<div class="a" style="left:157px;top:474px;width:3px;height:1px;background:#000"></div>
<div class="a" style="left:157px;top:514px;width:3px;height:1px;background:#000"></div>
<div class="a" style="left:157px;top:554px;width:3px;height:1px;background:#000"></div>
<div class="a" style="left:153px;top:595px;width:7px;height:1px;background:#000"></div>
<div class="a" style="left:147px;top:243px;width:13px;height:1px;background:#000"></div>
<div class="a" style="left:146px;top:182px;width:14px;height:10px;overflow:hidden"><div class="t" style="left:2px;top:8px;font-size:10px;color:#000;transform:rotate(-90deg);transform-origin:0 0">50</div></div>
<div class="t" style="left:148px;top:392px;font-size:10px;color:#000;transform:rotate(-90deg);transform-origin:0 0">0</div>
<div class="t" style="left:148px;top:595px;font-size:10px;color:#000;transform:rotate(-90deg);transform-origin:0 0">50</div>
<div class="a" style="left:162px;top:180px;width:906px;height:2px;background:#7c7c7c"></div>
<div class="a" style="left:162px;top:180px;width:2px;height:443px;background:#7c7c7c"></div>
<div class="a" style="left:164px;top:182px;width:886px;height:423px;background:#c0c0c0"></div>
<div class="a" style="left:1050px;top:182px;width:1px;height:424px;background:#fff"></div>
<div class="a" style="left:164px;top:605px;width:887px;height:1px;background:#fff"></div>
<div class="a" style="left:1051px;top:182px;width:17px;height:423px;background:#f0f0f0"></div>
<div class="a" style="left:164px;top:606px;width:904px;height:16px;background:#f0f0f0"></div>
<div class="a" style="left:164px;top:622px;width:905px;height:1px;background:#fff"></div>
<div class="a" style="left:1068px;top:182px;width:1px;height:441px;background:#fff"></div>
<div class="a" style="left:1051px;top:377px;width:15px;height:34px;background:#cdcdcd"></div>
<div class="a" style="left:529px;top:606px;width:156px;height:15px;background:#cdcdcd"></div>
<svg style="left:1054px;top:186px;" width="9" height="8" viewBox="0 0 9 8"><path d="M1 6L4.5 2.5L8 6" fill="none" stroke="#555" stroke-width="1.8"/></svg>
<svg style="left:1054px;top:593px;" width="9" height="8" viewBox="0 0 9 8"><path d="M1 2L4.5 5.5L8 2" fill="none" stroke="#555" stroke-width="1.8"/></svg>
<svg style="left:168px;top:609px;" width="8" height="9" viewBox="0 0 8 9"><path d="M6 1L2.5 4.5L6 8" fill="none" stroke="#555" stroke-width="1.8"/></svg>
<svg style="left:1037px;top:609px;" width="8" height="9" viewBox="0 0 8 9"><path d="M2 1L5.5 4.5L2 8" fill="none" stroke="#555" stroke-width="1.8"/></svg>
<div class="a" style="left:406px;top:192px;width:403px;height:403px;background:#fff;border:1px solid #000"></div>
<div class="a" style="left:1073px;top:162px;width:293px;height:2px;background:#e9ecf2"></div>
<div class="a" style="left:1074px;top:164px;width:292px;height:19px;background:#bcc3cd"></div>
<div class="a" style="left:1073px;top:163px;width:1px;height:20px;background:#eef1f5"></div>
<div class="t s" style="left:1077.50px;top:167.00px;font-size:12px;color:#3f4150;font-weight:normal;transform:scaleX(0.9732);">Importer</div>
<svg style="left:1337px;top:166px;" width="12" height="12" viewBox="0 0 12 12"><path d="M3.5 1.5H8.5V6.5H3.5Z M2 6.5H10M6 6.5V11" fill="none" stroke="#666" stroke-width="1"/></svg>
<svg style="left:1354px;top:167px;" width="10" height="10" viewBox="0 0 10 10"><path d="M1 1L9 9M9 1L1 9" stroke="#6a6a6a" stroke-width="1.2"/></svg>
<div class="a" style="left:1078px;top:186px;width:68px;height:21px;background:linear-gradient(#f7f8fa,#e6e9ee);border:1px solid #b9bec6;border-bottom:none;border-radius:3px 3px 0 0;box-shadow:inset 1px 1px 0 #dff3f6"></div>
<svg style="left:1078px;top:187px;" width="17" height="17" viewBox="0 0 17 17"><rect x="2.5" y="1.5" width="13" height="13" fill="#fbfbf4" stroke="#8c8a60"/><path d="M1 3.5H4M1 6.5H4M1 9.5H4M1 12.5H4" stroke="#555"/><rect x="6" y="4" width="3" height="3" fill="#b89cf4"/><rect x="10" y="4" width="3" height="3" fill="#f4a090"/><rect x="6" y="8.5" width="3" height="3" fill="#8cb0f4"/><rect x="10" y="8.5" width="3" height="3" fill="#90e0a0"/></svg>
<div class="t s" style="left:1097.00px;top:190.00px;font-size:12px;color:#464860;font-weight:normal;transform:scaleX(0.9843);">Importer</div>
<svg style="left:1153px;top:188px;" width="16" height="15" viewBox="0 0 16 15"><path d="M1 1H15M1 14H15" stroke="#222" stroke-width="1.2"/><rect x="3" y="2" width="10" height="11" fill="#fff" stroke="#444" stroke-width=".8"/><rect x="4" y="3" width="8" height="9" fill="url(#rb)"/><defs><linearGradient id="rb" x1="0" y1="0" x2="0" y2="1"><stop offset="0" stop-color="#ff3030"/><stop offset=".3" stop-color="#ffe030"/><stop offset=".5" stop-color="#30e040"/><stop offset=".7" stop-color="#30a0ff"/><stop offset="1" stop-color="#a030ff"/></linearGradient></defs></svg>
<div class="t s" style="left:1171.00px;top:190.00px;font-size:12px;color:#464860;font-weight:normal;transform:scaleX(0.9762);">Couleur</div>
<svg style="left:1222px;top:188px;" width="18" height="14" viewBox="0 0 18 14"><path d="M1.5 1.0V3.6" stroke="#ff2a6a" stroke-width="1.1"/><path d="M3.5 1.0V3.6" stroke="#ff2a6a" stroke-width="1.1"/><path d="M5.5 1.0V3.6" stroke="#ff2a6a" stroke-width="1.1"/><path d="M7.5 1.0V3.6" stroke="#ff2a6a" stroke-width="1.1"/><path d="M9.5 1.0V3.6" stroke="#ff2a6a" stroke-width="1.1"/><path d="M11.5 1.0V3.6" stroke="#ff2a6a" stroke-width="1.1"/><path d="M13.5 1.0V3.6" stroke="#ff2a6a" stroke-width="1.1"/><path d="M15.5 1.0V3.6" stroke="#ff2a6a" stroke-width="1.1"/><path d="M2.5 3.6V6.2" stroke="#f04a8a" stroke-width="1.1"/><path d="M4.5 3.6V6.2" stroke="#f04a8a" stroke-width="1.1"/><path d="M6.5 3.6V6.2" stroke="#f04a8a" stroke-width="1.1"/><path d="M8.5 3.6V6.2" stroke="#f04a8a" stroke-width="1.1"/><path d="M10.5 3.6V6.2" stroke="#f04a8a" stroke-width="1.1"/><path d="M12.5 3.6V6.2" stroke="#f04a8a" stroke-width="1.1"/><path d="M14.5 3.6V6.2" stroke="#f04a8a" stroke-width="1.1"/><path d="M16.5 3.6V6.2" stroke="#f04a8a" stroke-width="1.1"/><path d="M1.5 6.2V8.8" stroke="#c060c0" stroke-width="1.1"/><path d="M3.5 6.2V8.8" stroke="#c060c0" stroke-width="1.1"/><path d="M5.5 6.2V8.8" stroke="#c060c0" stroke-width="1.1"/><path d="M7.5 6.2V8.8" stroke="#c060c0" stroke-width="1.1"/><path d="M9.5 6.2V8.8" stroke="#c060c0" stroke-width="1.1"/><path d="M11.5 6.2V8.8" stroke="#c060c0" stroke-width="1.1"/><path d="M13.5 6.2V8.8" stroke="#c060c0" stroke-width="1.1"/><path d="M15.5 6.2V8.8" stroke="#c060c0" stroke-width="1.1"/><path d="M2.5 8.8V11.4" stroke="#6a6ae8" stroke-width="1.1"/><path d="M4.5 8.8V11.4" stroke="#6a6ae8" stroke-width="1.1"/><path d="M6.5 8.8V11.4" stroke="#6a6ae8" stroke-width="1.1"/><path d="M8.5 8.8V11.4" stroke="#6a6ae8" stroke-width="1.1"/><path d="M10.5 8.8V11.4" stroke="#6a6ae8" stroke-width="1.1"/><path d="M12.5 8.8V11.4" stroke="#6a6ae8" stroke-width="1.1"/><path d="M14.5 8.8V11.4" stroke="#6a6ae8" stroke-width="1.1"/><path d="M16.5 8.8V11.4" stroke="#6a6ae8" stroke-width="1.1"/><path d="M1.5 11.4V14.0" stroke="#3a62f0" stroke-width="1.1"/><path d="M3.5 11.4V14.0" stroke="#3a62f0" stroke-width="1.1"/><path d="M5.5 11.4V14.0" stroke="#3a62f0" stroke-width="1.1"/><path d="M7.5 11.4V14.0" stroke="#3a62f0" stroke-width="1.1"/><path d="M9.5 11.4V14.0" stroke="#3a62f0" stroke-width="1.1"/><path d="M11.5 11.4V14.0" stroke="#3a62f0" stroke-width="1.1"/><path d="M13.5 11.4V14.0" stroke="#3a62f0" stroke-width="1.1"/><path d="M15.5 11.4V14.0" stroke="#3a62f0" stroke-width="1.1"/></svg>
<div class="t s" style="left:1242.00px;top:190.00px;font-size:12px;color:#464860;font-weight:normal;transform:scaleX(0.8845);">Caractér...</div>
<div class="t" style="left:1298.00px;top:190.00px;font-size:12px;color:#0c1a3c;font-weight:bold;transform:scaleX(0.8092);">AB</div>
<div class="t s" style="left:1315.00px;top:190.00px;font-size:12px;color:#464860;font-weight:normal;transform:scaleX(1.0208);">Attribut...</div>
<div class="a" style="left:1073px;top:206px;width:293px;height:417px;background:#cfd4dc;border-left:2px solid #eef1f5;border-top:1px solid #eef1f5"></div>
<div class="a" style="left:1073px;top:206px;width:1px;height:417px;background:#b4b9c1"></div>
<div class="a" style="left:1073px;top:621px;width:293px;height:2px;background:#eef1f5"></div>
<div class="t" style="left:1091.00px;top:224.00px;font-size:12px;color:#000;font-weight:normal;transform:scaleX(0.8664);">À partir de</div>
<div class="t" style="left:1091.50px;top:259.00px;font-size:12px;color:#000;font-weight:normal;transform:scaleX(0.8558);">Catégorie</div>
<div class="a" style="left:1171px;top:220px;width:188px;height:21px;background:#fff;border-top:2px solid #6f6f6f;border-left:2px solid #6f6f6f;border-bottom:1px solid #f4f4f4;border-right:1px solid #f4f4f4"></div>
<div class="a" style="left:1340px;top:222px;width:17px;height:18px;background:#f0f0f0;border-right:2px solid #6a6a6a;border-bottom:2px solid #6a6a6a;border-top:1px solid #fff;border-left:1px solid #fff"></div>
<svg style="left:1344px;top:228px;" width="9" height="5" viewBox="0 0 9 5"><path d="M0 0H9L4.5 5Z" fill="#000"/></svg>
<div class="t" style="left:1175.90px;top:224.00px;font-size:12px;color:#000;font-weight:normal;transform:scaleX(0.8628);">Bibliothèque de motifs</div>
<div class="a" style="left:1171px;top:256px;width:188px;height:21px;background:#fff;border-top:2px solid #6f6f6f;border-left:2px solid #6f6f6f;border-bottom:1px solid #f4f4f4;border-right:1px solid #f4f4f4"></div>
<div class="a" style="left:1340px;top:258px;width:17px;height:18px;background:#f0f0f0;border-right:2px solid #6a6a6a;border-bottom:2px solid #6a6a6a;border-top:1px solid #fff;border-left:1px solid #fff"></div>
<svg style="left:1344px;top:264px;" width="9" height="5" viewBox="0 0 9 5"><path d="M0 0H9L4.5 5Z" fill="#000"/></svg>
<div class="t" style="left:1175.90px;top:260.00px;font-size:12px;color:#000;font-weight:normal;transform:scaleX(0.8033);">Floral</div>
<div class="a" style="left:1084px;top:294px;width:275px;height:269px;background:#fff;border-top:2px solid #6f6f6f;border-left:2px solid #6f6f6f;border-bottom:1px solid #f6f6f6;border-right:1px solid #f6f6f6"></div>
<div class="a" style="left:1341px;top:296px;width:17px;height:266px;background:#f0f0f0"></div>
<div class="a" style="left:1341px;top:313px;width:16px;height:41px;background:#cdcdcd"></div>
<svg style="left:1344px;top:301px;" width="9" height="8" viewBox="0 0 9 8"><path d="M1 6L4.5 2.5L8 6" fill="none" stroke="#555" stroke-width="1.8"/></svg>
<svg style="left:1344px;top:547px;" width="9" height="8" viewBox="0 0 9 8"><path d="M1 2L4.5 5.5L8 2" fill="none" stroke="#555" stroke-width="1.8"/></svg>
<svg style="left:1092px;top:314px;" width="68" height="32" viewBox="0 0 68 32"><g fill="#2a8a2a"><path d="M2 2L8 8L4 11Z"/><path d="M11 5L18 8L13 12Z"/><path d="M6 16L12 14L10 20Z"/><path d="M18 18L23 17L21 24Z"/><path d="M28 2L30 9L26 8Z"/><path d="M37 2L38 9L33 7Z"/><path d="M43 4L46 8L41 9Z"/><path d="M58 9L61 16L56 17Z"/><path d="M31 18L36 20L31 24Z"/><path d="M47 17L50 24L45 22Z"/><path d="M60 5L63 3L59 10Z"/></g>
<g fill="#f0568f"><circle cx="7.3" cy="10.4" r="4"/><circle cx="15.5" cy="15.8" r="4.2"/><circle cx="27.2" cy="11" r="6"/><circle cx="38" cy="13" r="3.8"/><circle cx="40.8" cy="22" r="4.6"/><circle cx="51" cy="11" r="5.2"/><circle cx="54.5" cy="20.6" r="3.4"/><circle cx="62.8" cy="5.8" r="2.2"/><circle cx="22" cy="19" r="2.5"/></g>
<g fill="#fbb6d0"><circle cx="26" cy="10" r="1"/><circle cx="51" cy="10" r="1"/><circle cx="15" cy="15" r=".8"/></g></svg>
<svg style="left:1175px;top:299px;" width="62" height="62" viewBox="0 0 62 62"><ellipse cx="30" cy="11.75" rx="4.0" ry="12.25" fill="#fff200" transform="rotate(0.0 30 30)"/><ellipse cx="30" cy="11.75" rx="4.0" ry="12.25" fill="#fff200" transform="rotate(22.5 30 30)"/><ellipse cx="30" cy="11.75" rx="4.0" ry="12.25" fill="#fff200" transform="rotate(45.0 30 30)"/><ellipse cx="30" cy="11.75" rx="4.0" ry="12.25" fill="#fff200" transform="rotate(67.5 30 30)"/><ellipse cx="30" cy="11.75" rx="4.0" ry="12.25" fill="#fff200" transform="rotate(90.0 30 30)"/><ellipse cx="30" cy="11.75" rx="4.0" ry="12.25" fill="#fff200" transform="rotate(112.5 30 30)"/><ellipse cx="30" cy="11.75" rx="4.0" ry="12.25" fill="#fff200" transform="rotate(135.0 30 30)"/><ellipse cx="30" cy="11.75" rx="4.0" ry="12.25" fill="#fff200" transform="rotate(157.5 30 30)"/><ellipse cx="30" cy="11.75" rx="4.0" ry="12.25" fill="#fff200" transform="rotate(180.0 30 30)"/><ellipse cx="30" cy="11.75" rx="4.0" ry="12.25" fill="#fff200" transform="rotate(202.5 30 30)"/><ellipse cx="30" cy="11.75" rx="4.0" ry="12.25" fill="#fff200" transform="rotate(225.0 30 30)"/><ellipse cx="30" cy="11.75" rx="4.0" ry="12.25" fill="#fff200" transform="rotate(247.5 30 30)"/><ellipse cx="30" cy="11.75" rx="4.0" ry="12.25" fill="#fff200" transform="rotate(270.0 30 30)"/><ellipse cx="30" cy="11.75" rx="4.0" ry="12.25" fill="#fff200" transform="rotate(292.5 30 30)"/><ellipse cx="30" cy="11.75" rx="4.0" ry="12.25" fill="#fff200" transform="rotate(315.0 30 30)"/><ellipse cx="30" cy="11.75" rx="4.0" ry="12.25" fill="#fff200" transform="rotate(337.5 30 30)"/><ellipse cx="30" cy="16.00" rx="1.5" ry="6.00" fill="#d46a10" transform="rotate(11.2 30 30)"/><ellipse cx="30" cy="16.00" rx="1.5" ry="6.00" fill="#d46a10" transform="rotate(33.8 30 30)"/><ellipse cx="30" cy="16.00" rx="1.5" ry="6.00" fill="#d46a10" transform="rotate(56.2 30 30)"/><ellipse cx="30" cy="16.00" rx="1.5" ry="6.00" fill="#d46a10" transform="rotate(78.8 30 30)"/><ellipse cx="30" cy="16.00" rx="1.5" ry="6.00" fill="#d46a10" transform="rotate(101.2 30 30)"/><ellipse cx="30" cy="16.00" rx="1.5" ry="6.00" fill="#d46a10" transform="rotate(123.8 30 30)"/><ellipse cx="30" cy="16.00" rx="1.5" ry="6.00" fill="#d46a10" transform="rotate(146.2 30 30)"/><ellipse cx="30" cy="16.00" rx="1.5" ry="6.00" fill="#d46a10" transform="rotate(168.8 30 30)"/><ellipse cx="30" cy="16.00" rx="1.5" ry="6.00" fill="#d46a10" transform="rotate(191.2 30 30)"/><ellipse cx="30" cy="16.00" rx="1.5" ry="6.00" fill="#d46a10" transform="rotate(213.8 30 30)"/><ellipse cx="30" cy="16.00" rx="1.5" ry="6.00" fill="#d46a10" transform="rotate(236.2 30 30)"/><ellipse cx="30" cy="16.00" rx="1.5" ry="6.00" fill="#d46a10" transform="rotate(258.8 30 30)"/><ellipse cx="30" cy="16.00" rx="1.5" ry="6.00" fill="#d46a10" transform="rotate(281.2 30 30)"/><ellipse cx="30" cy="16.00" rx="1.5" ry="6.00" fill="#d46a10" transform="rotate(303.8 30 30)"/><ellipse cx="30" cy="16.00" rx="1.5" ry="6.00" fill="#d46a10" transform="rotate(326.2 30 30)"/><ellipse cx="30" cy="16.00" rx="1.5" ry="6.00" fill="#d46a10" transform="rotate(348.8 30 30)"/><circle cx="30" cy="30" r="11" fill="#111"/><circle cx="30" cy="30" r="8.5" fill="#ffe800"/><path d="M24 26L36 34M23 31L33 37M27 23L37 29M26 24L24 35M30 22L28 37M34 23L32 37" stroke="#222" stroke-width="1.1"/></svg>
<svg style="left:1250px;top:298px;" width="70" height="64" viewBox="0 0 70 64"><g fill="#f8b236"><path d="M4 8Q10 0 18 4Q26 0 32 7L31 20Q28 31 18 31Q8 31 6 21Z"/><path d="M40 7Q46 0 54 4Q62 0 67 7L66 20Q63 31 53 31Q43 31 41 21Z"/></g>
<g fill="#fde4b0" opacity=".7"><path d="M10 12H14M20 16H25M12 22H16M46 12H50M55 18H60M48 24H52" stroke="#fde4b0" stroke-width="1"/></g>
<g stroke="#2c7a1e" stroke-width="2" fill="none"><path d="M22 31Q26 44 36 55"/><path d="M54 31Q50 44 38 55"/><path d="M20 54L44 58"/></g>
<g fill="#2c7a1e"><path d="M12 40L24 34L22 46L13 48Z"/><path d="M52 42L64 52L54 52Z"/><path d="M20 52L30 50L28 58Z"/></g></svg>
<svg style="left:1092px;top:402px;" width="68" height="56" viewBox="0 0 68 56"><g fill="#98d078"><path d="M20 22Q30 32 48 45L45 47Q30 36 18 25Z"/><path d="M30 34Q36 16 50 10Q46 26 34 36Z"/><path d="M30 40Q22 44 16 54Q30 52 40 44Z"/><path d="M38 43Q52 44 66 49Q54 42 40 40Z"/></g>
<circle cx="16" cy="16" r="13.5" fill="#f8b8c8"/><ellipse cx="15.5" cy="15" rx="7" ry="4.5" fill="#fcf0a8" transform="rotate(-15 15.5 15)"/></svg>
<svg style="left:1175px;top:398px;" width="62" height="64" viewBox="0 0 62 64"><ellipse cx="31" cy="15.00" rx="8.5" ry="14.00" fill="#fff014" transform="rotate(0.0 31 32)"/><ellipse cx="31" cy="15.00" rx="8.5" ry="14.00" fill="#fff014" transform="rotate(45.0 31 32)"/><ellipse cx="31" cy="15.00" rx="8.5" ry="14.00" fill="#fff014" transform="rotate(90.0 31 32)"/><ellipse cx="31" cy="15.00" rx="8.5" ry="14.00" fill="#fff014" transform="rotate(135.0 31 32)"/><ellipse cx="31" cy="15.00" rx="8.5" ry="14.00" fill="#fff014" transform="rotate(180.0 31 32)"/><ellipse cx="31" cy="15.00" rx="8.5" ry="14.00" fill="#fff014" transform="rotate(225.0 31 32)"/><ellipse cx="31" cy="15.00" rx="8.5" ry="14.00" fill="#fff014" transform="rotate(270.0 31 32)"/><ellipse cx="31" cy="15.00" rx="8.5" ry="14.00" fill="#fff014" transform="rotate(315.0 31 32)"/><ellipse cx="31" cy="20.00" rx="0.6" ry="10.00" fill="#e0a000" transform="rotate(15.0 31 32)"/><ellipse cx="31" cy="20.00" rx="0.6" ry="10.00" fill="#e0a000" transform="rotate(45.0 31 32)"/><ellipse cx="31" cy="20.00" rx="0.6" ry="10.00" fill="#e0a000" transform="rotate(75.0 31 32)"/><ellipse cx="31" cy="20.00" rx="0.6" ry="10.00" fill="#e0a000" transform="rotate(105.0 31 32)"/><ellipse cx="31" cy="20.00" rx="0.6" ry="10.00" fill="#e0a000" transform="rotate(135.0 31 32)"/><ellipse cx="31" cy="20.00" rx="0.6" ry="10.00" fill="#e0a000" transform="rotate(165.0 31 32)"/><ellipse cx="31" cy="20.00" rx="0.6" ry="10.00" fill="#e0a000" transform="rotate(195.0 31 32)"/><ellipse cx="31" cy="20.00" rx="0.6" ry="10.00" fill="#e0a000" transform="rotate(225.0 31 32)"/><ellipse cx="31" cy="20.00" rx="0.6" ry="10.00" fill="#e0a000" transform="rotate(255.0 31 32)"/><ellipse cx="31" cy="20.00" rx="0.6" ry="10.00" fill="#e0a000" transform="rotate(285.0 31 32)"/><ellipse cx="31" cy="20.00" rx="0.6" ry="10.00" fill="#e0a000" transform="rotate(315.0 31 32)"/><ellipse cx="31" cy="20.00" rx="0.6" ry="10.00" fill="#e0a000" transform="rotate(345.0 31 32)"/><circle cx="31" cy="32" r="5" fill="#e2a400"/></svg>
<svg style="left:1255px;top:398px;" width="62" height="64" viewBox="0 0 62 64"><ellipse cx="31" cy="14.5" rx="12" ry="13.5" fill="#fff" stroke="#2280c4" stroke-width="1.3" transform="rotate(10 31 31.5)"/><ellipse cx="31" cy="14.5" rx="12" ry="13.5" fill="#fff" stroke="#2280c4" stroke-width="1.3" transform="rotate(82 31 31.5)"/><ellipse cx="31" cy="14.5" rx="12" ry="13.5" fill="#fff" stroke="#2280c4" stroke-width="1.3" transform="rotate(154 31 31.5)"/><ellipse cx="31" cy="14.5" rx="12" ry="13.5" fill="#fff" stroke="#2280c4" stroke-width="1.3" transform="rotate(226 31 31.5)"/><ellipse cx="31" cy="14.5" rx="12" ry="13.5" fill="#fff" stroke="#2280c4" stroke-width="1.3" transform="rotate(298 31 31.5)"/><circle cx="31" cy="31.5" r="15" fill="#fff"/><path d="M37.0 31.8L49.0 32.4" stroke="#2280c4" stroke-width="1"/><path d="M36.8 32.8L44.6 34.6" stroke="#2280c4" stroke-width="1"/><path d="M36.5 33.8L47.6 38.5" stroke="#2280c4" stroke-width="1"/><path d="M36.0 34.8L42.7 39.1" stroke="#2280c4" stroke-width="1"/><path d="M35.4 35.6L44.2 43.8" stroke="#2280c4" stroke-width="1"/><path d="M34.6 36.3L39.4 42.7" stroke="#2280c4" stroke-width="1"/><path d="M33.7 36.8L39.2 47.5" stroke="#2280c4" stroke-width="1"/><path d="M32.8 37.2L35.1 44.9" stroke="#2280c4" stroke-width="1"/><path d="M31.7 37.5L33.2 49.4" stroke="#2280c4" stroke-width="1"/><path d="M30.7 37.5L30.3 45.5" stroke="#2280c4" stroke-width="1"/><path d="M29.7 37.3L27.0 49.0" stroke="#2280c4" stroke-width="1"/><path d="M28.7 37.0L25.5 44.4" stroke="#2280c4" stroke-width="1"/><path d="M27.7 36.5L21.2 46.6" stroke="#2280c4" stroke-width="1"/><path d="M26.9 35.9L21.5 41.7" stroke="#2280c4" stroke-width="1"/><path d="M26.2 35.1L16.6 42.3" stroke="#2280c4" stroke-width="1"/><path d="M25.7 34.2L18.5 37.9" stroke="#2280c4" stroke-width="1"/><path d="M25.3 33.3L13.8 36.8" stroke="#2280c4" stroke-width="1"/><path d="M25.0 32.2L17.1 33.2" stroke="#2280c4" stroke-width="1"/><path d="M25.0 31.2L13.0 30.6" stroke="#2280c4" stroke-width="1"/><path d="M25.2 30.2L17.4 28.4" stroke="#2280c4" stroke-width="1"/><path d="M25.5 29.2L14.4 24.5" stroke="#2280c4" stroke-width="1"/><path d="M26.0 28.2L19.3 23.9" stroke="#2280c4" stroke-width="1"/><path d="M26.6 27.4L17.8 19.2" stroke="#2280c4" stroke-width="1"/><path d="M27.4 26.7L22.6 20.3" stroke="#2280c4" stroke-width="1"/><path d="M28.3 26.2L22.8 15.5" stroke="#2280c4" stroke-width="1"/><path d="M29.2 25.8L26.9 18.1" stroke="#2280c4" stroke-width="1"/><path d="M30.3 25.5L28.8 13.6" stroke="#2280c4" stroke-width="1"/><path d="M31.3 25.5L31.7 17.5" stroke="#2280c4" stroke-width="1"/><path d="M32.3 25.7L35.0 14.0" stroke="#2280c4" stroke-width="1"/><path d="M33.3 26.0L36.5 18.6" stroke="#2280c4" stroke-width="1"/><path d="M34.3 26.5L40.8 16.4" stroke="#2280c4" stroke-width="1"/><path d="M35.1 27.1L40.5 21.3" stroke="#2280c4" stroke-width="1"/><path d="M35.8 27.9L45.4 20.7" stroke="#2280c4" stroke-width="1"/><path d="M36.3 28.8L43.5 25.1" stroke="#2280c4" stroke-width="1"/><path d="M36.7 29.7L48.2 26.2" stroke="#2280c4" stroke-width="1"/><path d="M37.0 30.8L44.9 29.8" stroke="#2280c4" stroke-width="1"/></svg>
<svg style="left:1094px;top:499px;" width="62" height="62" viewBox="0 0 62 62"><path d="M2 58Q6 52 8 44Q12 20 22 10Q30 6 34 14Q38 28 40 46Q40 54 44 60L30 58L22 60L14 57Z" fill="#ffee20" stroke="#f8b830" stroke-width=".8"/>
<path d="M12 50Q16 30 24 16M22 54Q24 34 30 16" stroke="#fff8b0" stroke-width="1.2" fill="none"/>
<g stroke="#90d070" stroke-width="2.2" fill="none"><path d="M34 12Q36 4 34 0"/><path d="M34 12Q44 2 54 6Q60 12 58 30"/></g></svg>
<svg style="left:1175px;top:498px;" width="61" height="63" viewBox="0 0 61 63"><rect x="1.5" y="1.5" width="58" height="60" fill="#fff" stroke="#b27a22" stroke-width="3"/>
<g fill="#f4589a"><path d="M9 14Q8 6 16 10Q20 2 25 9Q30 0 35 9Q40 2 44 10Q53 6 52 15Q50 30 40 36Q32 41 30 40Q20 40 14 34Q8 26 9 14Z"/><circle cx="22" cy="7" r="3"/><circle cx="38" cy="7" r="3"/></g>
<path d="M20 20L26 28M33 14L36 26M42 18L40 28" stroke="#fbd0e0" stroke-width="1"/>
<g fill="#08683a"><path d="M4 38Q18 34 30 52Q14 58 4 38Z"/><path d="M57 36Q42 36 31 52Q48 56 57 36Z"/><rect x="28.5" y="38" width="4" height="18"/></g></svg>
<svg style="left:1255px;top:498px;" width="61" height="63" viewBox="0 0 61 63"><rect x="1.5" y="1.5" width="58" height="60" fill="#fff" stroke="#b27a22" stroke-width="3"/>
<g fill="#2a8a72"><path d="M10 10L18 16L12 20Z"/><path d="M46 8L52 14L44 18Z"/><path d="M4 34L12 32L8 42Z"/><path d="M48 48L56 44L54 54Z"/><path d="M20 54L28 48L26 58Z"/><path d="M34 50L40 56L34 58Z"/></g>
<circle cx="31.0" cy="15.0" r="10" fill="#e8202a"/><circle cx="42.7" cy="20.6" r="10" fill="#e8202a"/><circle cx="45.7" cy="33.1" r="10" fill="#e8202a"/><circle cx="37.8" cy="43.4" r="10" fill="#e8202a"/><circle cx="24.9" cy="43.7" r="10" fill="#e8202a"/><circle cx="16.5" cy="33.9" r="10" fill="#e8202a"/><circle cx="18.9" cy="21.2" r="10" fill="#e8202a"/><circle cx="30.2" cy="15.0" r="10" fill="#e8202a"/>
<circle cx="31" cy="30" r="12" fill="#f6d0b0"/><circle cx="31" cy="30" r="7" fill="#fff200"/></svg>
<div class="t" style="left:1092.70px;top:367.00px;font-size:12px;color:#000;font-weight:normal;transform:scaleX(0.8949);">33100110.pes</div>
<div class="t" style="left:1172.70px;top:367.00px;font-size:12px;color:#000;font-weight:normal;transform:scaleX(0.8949);">33100117.pes</div>
<div class="t" style="left:1252.70px;top:367.00px;font-size:12px;color:#000;font-weight:normal;transform:scaleX(0.8844);">33100225.pes</div>
<div class="t" style="left:1092.70px;top:467.00px;font-size:12px;color:#000;font-weight:normal;transform:scaleX(0.8844);">33100226.pes</div>
<div class="t" style="left:1172.70px;top:467.00px;font-size:12px;color:#000;font-weight:normal;transform:scaleX(0.8844);">33100227.pes</div>
<div class="t" style="left:1249.90px;top:467.00px;font-size:12px;color:#000;font-weight:normal;transform:scaleX(0.8851);">33100306b.pes</div>
<div class="a" style="left:1176px;top:571px;width:75px;height:42px;background:#efefef;border-top:1px solid #fff;border-left:1px solid #fff;border-right:2px solid #6a6a6a;border-bottom:2px solid #6a6a6a;box-shadow:0 0 0 1px #a0a0a0"></div>
<div class="t s" style="left:1194.60px;top:586.00px;font-size:12px;color:#8c8c8c;font-weight:normal;transform:scaleX(0.8367);text-shadow:1px 1px 0 #fff">Importer</div>
<div class="a" style="left:4px;top:640px;width:24px;height:22px;background:#cbcbcb;border:1px solid #c0c0c0"></div>
<svg style="left:4px;top:640px;" width="24" height="22" viewBox="0 0 24 22"><path d="M6.5 6V16" stroke="#7a7a8a" stroke-width="2"/><path d="M18 5.5V16.5L9 11Z" fill="#7a7a8a"/></svg>
<div class="a" style="left:47px;top:641px;width:993px;height:2px;background:#808080"></div>
<div class="a" style="left:47px;top:657px;width:993px;height:2px;background:#fff"></div>
<div class="a" style="left:1039px;top:641px;width:2px;height:18px;background:#fff"></div>
<div class="a" style="left:37px;top:638px;width:11px;height:24px;background:#efefef;border-top:1px solid #fff;border-left:1px solid #fff;border-right:2px solid #707070;border-bottom:2px solid #707070"></div>
<div class="a" style="left:1053px;top:640px;width:24px;height:22px;background:#cbcbcb;border:1px solid #c0c0c0"></div>
<svg style="left:1053px;top:640px;" width="24" height="22" viewBox="0 0 24 22"><path d="M17.5 6V16" stroke="#7a7a8a" stroke-width="2"/><path d="M6 5.5V16.5L15 11Z" fill="#7a7a8a"/></svg>
<div class="a" style="left:1089px;top:640px;width:42px;height:22px;background:#cbcbcb;border:1px solid #c0c0c0"></div>
<svg style="left:1089px;top:640px;" width="42" height="22" viewBox="0 0 42 22"><path d="M17 5V17L26 11Z" fill="#9a9a9a"/></svg>
<div class="a" style="left:1138px;top:640px;width:42px;height:22px;background:#cbcbcb;border:1px solid #c0c0c0"></div>
<div class="a" style="left:1153px;top:645px;width:11px;height:11px;background:#73738a"></div>
<div class="a" style="left:1204px;top:634px;width:1px;height:4px;background:#000"></div>
<div class="a" style="left:1221px;top:634px;width:1px;height:4px;background:#000"></div>
<div class="a" style="left:1238px;top:634px;width:1px;height:4px;background:#000"></div>
<div class="a" style="left:1255px;top:634px;width:1px;height:4px;background:#000"></div>
<div class="a" style="left:1272px;top:634px;width:1px;height:4px;background:#000"></div>
<div class="a" style="left:1199px;top:649px;width:80px;height:2px;background:#808080"></div>
<div class="a" style="left:1199px;top:651px;width:80px;height:2px;background:#fff"></div>
<svg style="left:1232px;top:638px;" width="12" height="24" viewBox="0 0 12 24"><path d="M1.5 22.5V6L6 1.5L10.5 6V22.5Z" fill="#efefef" stroke="#fff"/><path d="M10.5 6V22.5H1.5" fill="none" stroke="#707070" stroke-width="1.5"/></svg>
<div class="a" style="left:1296px;top:645px;width:13px;height:13px;background:#fff;border-top:2px solid #808080;border-left:2px solid #808080;border-bottom:1px solid #fff;border-right:1px solid #fff"></div>
<div class="t" style="left:1314.80px;top:646.00px;font-size:12px;color:#000;font-weight:normal;transform:scaleX(0.8624);">Défil. auto.</div>
<div class="a" style="left:0px;top:666px;width:8px;height:9px;background:#fff;border:1px solid #9ca0a8"></div>
<div class="a" style="left:2px;top:670px;width:4px;height:1px;background:#000"></div>
<div class="a" style="left:14px;top:670px;width:1345px;height:1px;background:#a9adb4"></div>
<div class="a" style="left:14px;top:671px;width:1345px;height:1px;background:#fff"></div>
<div class="a" style="left:4px;top:682px;width:42px;height:22px;background:#cbcbcb;border:1px solid #c2c2c2"></div>
<svg style="left:9px;top:684px;" width="11" height="18" viewBox="0 0 11 18"><path d="M4.5 1V8.5L6.5 13L8.5 8.5V1" fill="#e6e6e6" stroke="#8a8a8a" stroke-width="1.2"/><path d="M6.5 4V6.5" stroke="#8a8a8a" stroke-width="1.2"/><path d="M6.5 13V15Q6.5 16 5 16H3.5" fill="none" stroke="#8a8a8a" stroke-width="1.1"/><path d="M.5 16H2" stroke="#8a8a8a" stroke-width="1.1"/></svg>
<div class="t s" style="left:21.00px;top:687.00px;font-size:12px;color:#70707e;font-weight:normal;transform:scaleX(0.8333);text-shadow:1px 1px 0 #fff">-100</div>
<div class="a" style="left:48px;top:682px;width:42px;height:22px;background:#cbcbcb;border:1px solid #c2c2c2"></div>
<svg style="left:53px;top:684px;" width="11" height="18" viewBox="0 0 11 18"><path d="M4.5 1V8.5L6.5 13L8.5 8.5V1" fill="#e6e6e6" stroke="#8a8a8a" stroke-width="1.2"/><path d="M6.5 4V6.5" stroke="#8a8a8a" stroke-width="1.2"/><path d="M6.5 13V15Q6.5 16 5 16H3.5" fill="none" stroke="#8a8a8a" stroke-width="1.1"/><path d="M.5 16H2" stroke="#8a8a8a" stroke-width="1.1"/></svg>
<div class="t s" style="left:68.00px;top:687.00px;font-size:12px;color:#70707e;font-weight:normal;transform:scaleX(0.7803);text-shadow:1px 1px 0 #fff">-10</div>
<div class="a" style="left:91px;top:682px;width:42px;height:22px;background:#cbcbcb;border:1px solid #c2c2c2"></div>
<svg style="left:96px;top:684px;" width="11" height="18" viewBox="0 0 11 18"><path d="M4.5 1V8.5L6.5 13L8.5 8.5V1" fill="#e6e6e6" stroke="#8a8a8a" stroke-width="1.2"/><path d="M6.5 4V6.5" stroke="#8a8a8a" stroke-width="1.2"/><path d="M6.5 13V15Q6.5 16 5 16H3.5" fill="none" stroke="#8a8a8a" stroke-width="1.1"/><path d="M.5 16H2" stroke="#8a8a8a" stroke-width="1.1"/></svg>
<div class="t s" style="left:114.00px;top:687.00px;font-size:12px;color:#70707e;font-weight:normal;transform:scaleX(0.7477);text-shadow:1px 1px 0 #fff">-1</div>
<div class="a" style="left:135px;top:683px;width:44px;height:21px;background:#f4f4f4;border-top:2px solid #707070;border-left:2px solid #707070;border-bottom:1px solid #fff;border-right:1px solid #fff"></div>
<div class="t" style="left:171.00px;top:687.00px;font-size:12px;color:#000;font-weight:normal;transform:scaleX(0.7463);">0</div>
<div class="t" style="left:180.00px;top:687.00px;font-size:12px;color:#000;font-weight:normal;transform:scaleX(0.8497);">/---</div>
<div class="a" style="left:222px;top:682px;width:42px;height:22px;background:#cbcbcb;border:1px solid #c2c2c2"></div>
<svg style="left:227px;top:684px;" width="11" height="18" viewBox="0 0 11 18"><path d="M4.5 1V8.5L6.5 13L8.5 8.5V1" fill="#e6e6e6" stroke="#8a8a8a" stroke-width="1.2"/><path d="M6.5 4V6.5" stroke="#8a8a8a" stroke-width="1.2"/><path d="M6.5 13V15Q6.5 16 5 16H3.5" fill="none" stroke="#8a8a8a" stroke-width="1.1"/><path d="M.5 16H2" stroke="#8a8a8a" stroke-width="1.1"/></svg>
<div class="t s" style="left:244.00px;top:687.00px;font-size:12px;color:#70707e;font-weight:normal;transform:scaleX(0.8321);text-shadow:1px 1px 0 #fff">+1</div>
<div class="a" style="left:265px;top:682px;width:42px;height:22px;background:#cbcbcb;border:1px solid #c2c2c2"></div>
<svg style="left:270px;top:684px;" width="11" height="18" viewBox="0 0 11 18"><path d="M4.5 1V8.5L6.5 13L8.5 8.5V1" fill="#e6e6e6" stroke="#8a8a8a" stroke-width="1.2"/><path d="M6.5 4V6.5" stroke="#8a8a8a" stroke-width="1.2"/><path d="M6.5 13V15Q6.5 16 5 16H3.5" fill="none" stroke="#8a8a8a" stroke-width="1.1"/><path d="M.5 16H2" stroke="#8a8a8a" stroke-width="1.1"/></svg>
<div class="t s" style="left:284.00px;top:687.00px;font-size:12px;color:#70707e;font-weight:normal;transform:scaleX(0.8824);text-shadow:1px 1px 0 #fff">+10</div>
<div class="a" style="left:309px;top:682px;width:42px;height:22px;background:#cbcbcb;border:1px solid #c2c2c2"></div>
<svg style="left:314px;top:684px;" width="11" height="18" viewBox="0 0 11 18"><path d="M4.5 1V8.5L6.5 13L8.5 8.5V1" fill="#e6e6e6" stroke="#8a8a8a" stroke-width="1.2"/><path d="M6.5 4V6.5" stroke="#8a8a8a" stroke-width="1.2"/><path d="M6.5 13V15Q6.5 16 5 16H3.5" fill="none" stroke="#8a8a8a" stroke-width="1.1"/><path d="M.5 16H2" stroke="#8a8a8a" stroke-width="1.1"/></svg>
<div class="t s" style="left:325.00px;top:687.00px;font-size:12px;color:#70707e;font-weight:normal;transform:scaleX(0.8741);text-shadow:1px 1px 0 #fff">+100</div>
<div class="a" style="left:361px;top:682px;width:41px;height:22px;background:#cbcbcb;border:1px solid #c2c2c2"></div>
<svg style="left:369px;top:685px;" width="18" height="16" viewBox="0 0 18 16"><path d="M1 1.5H15M1 14.5H15" stroke="#808080" stroke-width="1.6"/><rect x="3.5" y="2.5" width="9" height="11" fill="#e4e4e4" stroke="#8a8a8a"/><rect x="5" y="3.5" width="3" height="9" fill="#f8f8f8"/></svg>
<div class="t s" style="left:390.00px;top:687.00px;font-size:12px;color:#70707e;font-weight:normal;text-shadow:1px 1px 0 #fff">-</div>
<div class="a" style="left:405px;top:683px;width:26px;height:21px;background:#f4f4f4;border-top:2px solid #707070;border-left:2px solid #707070;border-bottom:1px solid #fff;border-right:1px solid #fff"></div>
<div class="t" style="left:422.00px;top:687.00px;font-size:12px;color:#000;font-weight:normal;transform:scaleX(0.7463);">0</div>
<div class="t" style="left:432.00px;top:687.00px;font-size:12px;color:#000;font-weight:normal;transform:scaleX(0.8497);">/---</div>
<div class="a" style="left:457px;top:682px;width:42px;height:22px;background:#cbcbcb;border:1px solid #c2c2c2"></div>
<svg style="left:465px;top:685px;" width="18" height="16" viewBox="0 0 18 16"><path d="M1 1.5H15M1 14.5H15" stroke="#808080" stroke-width="1.6"/><rect x="3.5" y="2.5" width="9" height="11" fill="#e4e4e4" stroke="#8a8a8a"/><rect x="5" y="3.5" width="3" height="9" fill="#f8f8f8"/></svg>
<div class="t s" style="left:485.00px;top:687.00px;font-size:12px;color:#70707e;font-weight:normal;transform:scaleX(0.8571);text-shadow:1px 1px 0 #fff">+</div>
<div class="a" style="left:0px;top:704px;width:1366px;height:4px;background:#cfd4dc"></div>
<div class="a" style="left:0px;top:708px;width:1366px;height:1px;background:#9ea3ab"></div>
<div class="a" style="left:0px;top:709px;width:1366px;height:19px;background:linear-gradient(#eaecef 0,#eaecef 1px,#dadde2 1px,#c6cad1 5px,#b5bac2 9px,#a9aeb6 12px,#b4b9c1 18px,#cbced4 18px)"></div>
<div class="t s" style="left:0.00px;top:714.00px;font-size:12px;color:#2a2c3a;font-weight:normal;transform:scaleX(0.9658);">Appuyez sur F1 pour consulter le manuel d'instructions.</div>
<div class="a" style="left:1055px;top:709px;width:311px;height:19px;background:linear-gradient(#e8eaee 0,#d3d6dc 9px,#adb0b6 9px,#b5b9be 18px,#c9ccd1 18px)"></div>
<div class="a" style="left:1055px;top:708px;width:1px;height:20px;background:#a3a8b0;box-shadow:1px 0 0 #f2f3f5"></div>
<div class="a" style="left:1063px;top:711px;width:21px;height:17px;border:1px solid #b3b8c0;border-radius:2px;background:linear-gradient(#fafbfc,#e3e6ea)"></div>
<div class="a" style="left:1087px;top:711px;width:21px;height:17px;border:1px solid #b3b8c0;border-radius:2px;background:linear-gradient(#fde0b0,#f8b860 50%,#fbd690)"></div>
<div class="a" style="left:1111px;top:711px;width:21px;height:17px;border:1px solid #b3b8c0;border-radius:2px;background:linear-gradient(#fafbfc,#e3e6ea)"></div>
<div class="a" style="left:1136px;top:711px;width:20px;height:17px;border:1px solid #b3b8c0;border-radius:2px;background:linear-gradient(#fafbfc,#e3e6ea)"></div>
<div class="a" style="left:1160px;top:711px;width:20px;height:17px;border:1px solid #b3b8c0;border-radius:2px;background:linear-gradient(#fafbfc,#e3e6ea)"></div>
<svg style="left:1063px;top:711px;" width="21" height="17" viewBox="0 0 21 17"><circle cx="10.5" cy="8.5" r="6" fill="#1f8ef0"/><circle cx="10.5" cy="8.5" r="2.6" fill="#bfe4ff"/></svg>
<svg style="left:1087px;top:711px;" width="21" height="17" viewBox="0 0 21 17"><circle cx="10.5" cy="8.5" r="6" fill="none" stroke="#2a90ec" stroke-width="2.4" stroke-dasharray="1 1"/><circle cx="10.5" cy="8.5" r="3" fill="none" stroke="#2a90ec" stroke-dasharray="1 .8"/></svg>
<svg style="left:1111px;top:711px;" width="21" height="17" viewBox="0 0 21 17"><circle cx="10.5" cy="8.5" r="6" fill="#5cacf4" stroke="#1f7ee0" stroke-width="1.3"/><circle cx="10.5" cy="8.5" r="3.3" fill="#8fd0ff" stroke="#3090ee"/></svg>
<svg style="left:1136px;top:711px;" width="20" height="17" viewBox="0 0 20 17"><rect x="4.5" y="2.5" width="11" height="12" fill="#fff" stroke="#555"/><path d="M7 5V12M10 5V12M13 5V12" stroke="#666" stroke-dasharray="1 1.5"/></svg>
<svg style="left:1160px;top:711px;" width="20" height="17" viewBox="0 0 20 17"><path d="M4.5 1.5H11L13.5 4V9M4.5 1.5V15.5H8" fill="none" stroke="#555"/><rect x="8.5" y="8.5" width="8" height="6" rx="1" fill="#f4f4f4" stroke="#555"/><path d="M10 11H15M10 13H15" stroke="#555" stroke-width=".7"/></svg>
<div class="t s" style="left:1192.80px;top:714.00px;font-size:12px;color:#2a2c3a;font-weight:normal;transform:scaleX(0.8567);">101%</div>
<svg style="left:1235px;top:711px;" width="18" height="18" viewBox="0 0 18 18"><circle cx="8.5" cy="8" r="7" fill="#eef0f2" stroke="#7c7c7c" stroke-width="1.3"/><path d="M4.5 8H12.5" stroke="#555" stroke-width="2"/></svg>
<div class="a" style="left:1259px;top:718px;width:87px;height:1px;background:#fafafa"></div>
<svg style="left:1295px;top:711px;" width="13" height="16" viewBox="0 0 13 16"><path d="M1.5 1.5H11.5V10L6.5 14.5L1.5 10Z" fill="#f4f4f4" stroke="#6a6a6a"/><path d="M6.5 4V9" stroke="#777"/></svg>
<svg style="left:1349px;top:711px;" width="18" height="18" viewBox="0 0 18 18"><circle cx="9" cy="8" r="7" fill="#eef0f2" stroke="#7c7c7c" stroke-width="1.3"/><path d="M5 8H13M9 4V12" stroke="#555" stroke-width="2"/></svg>
<div class="a" style="left:0px;top:728px;width:48px;height:2px;background:#111"></div>
<div class="a" style="left:48px;top:728px;width:344px;height:2px;background:#fff"></div>
<div class="a" style="left:392px;top:728px;width:974px;height:2px;background:#111"></div></body></html>
